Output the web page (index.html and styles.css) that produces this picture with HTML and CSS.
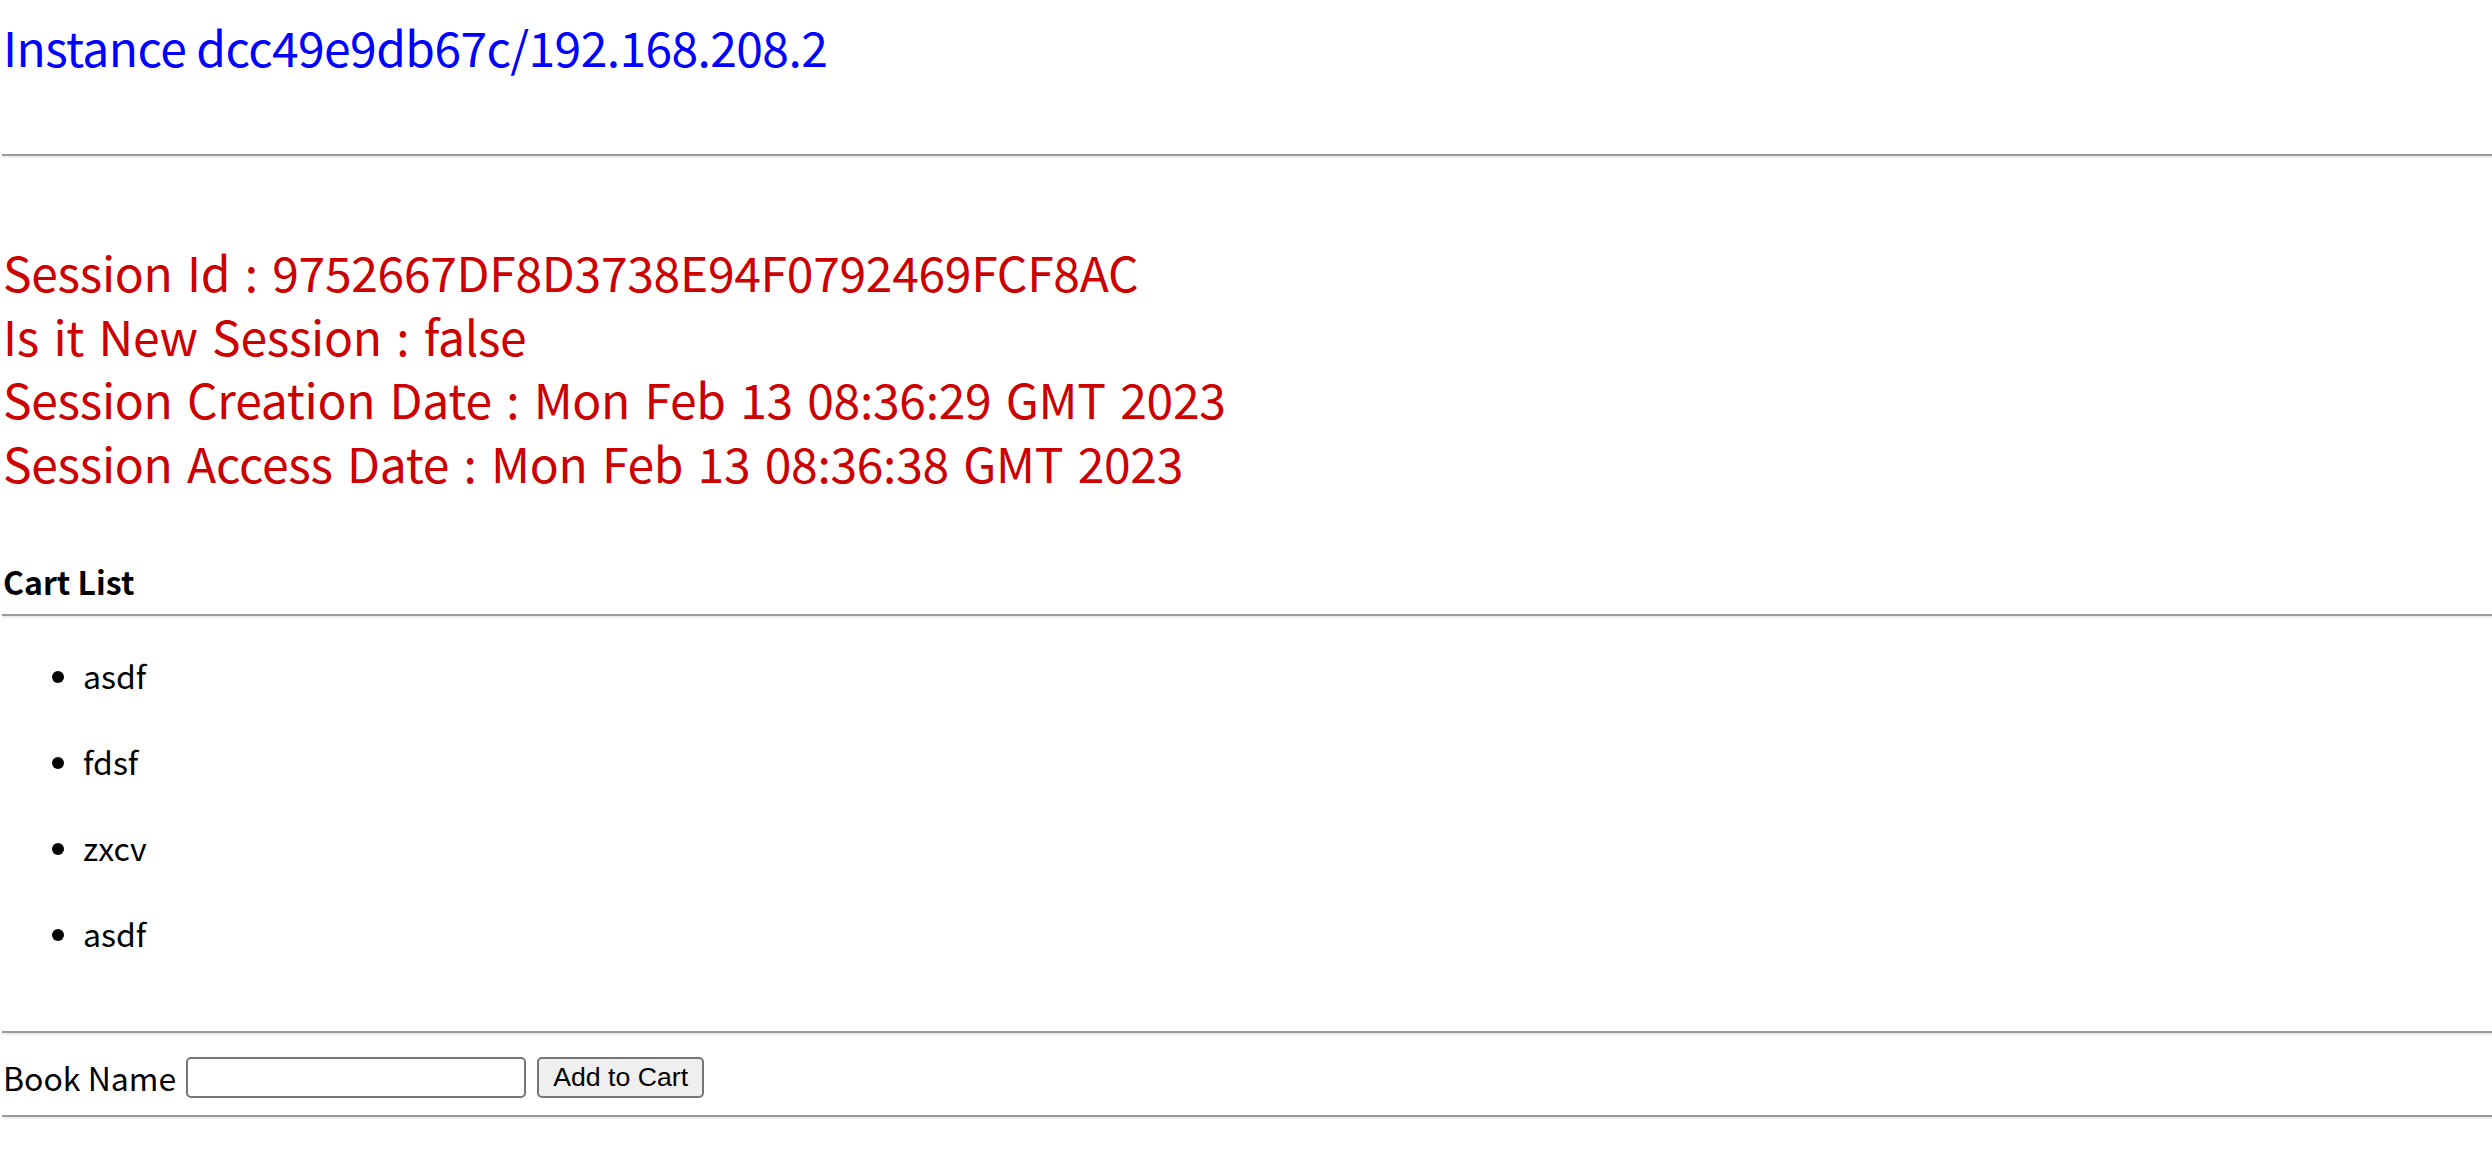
FILE: index.html
```html
<!DOCTYPE html>
<html>
<head>
<meta charset="utf-8">
<title>Session</title>
<link rel="stylesheet" href="styles.css">
</head>
<body>
<div class="page">
  <div class="instance">Instance dcc49e9db67c/192.168.208.2</div>
  <hr class="rule rule-top">
  <div class="session">
    <div class="line">Session Id : 9752667DF8D3738E94F0792469FCF8AC</div>
    <div class="line">Is it New Session : false</div>
    <div class="line">Session Creation Date : Mon Feb 13 08:36:29 GMT 2023</div>
    <div class="line">Session Access Date : Mon Feb 13 08:36:38 GMT 2023</div>
  </div>
  <div class="cart-title">Cart List</div>
  <hr class="rule rule-cart">
  <ul class="cart">
    <li>asdf</li>
    <li>fdsf</li>
    <li>zxcv</li>
    <li>asdf</li>
  </ul>
  <hr class="rule rule-form">
  <form class="add-form">
    <label class="label" for="book">Book Name</label>
    <input class="field" id="book" type="text">
    <button class="btn" type="button">Add to Cart</button>
  </form>
  <hr class="rule rule-bottom">
</div>
</body>
</html>
```
FILE: styles.css
```css
html, body {
  margin: 0;
  padding: 0;
  background: #ffffff;
}

.page {
  padding-left: 3px;
  font-family: "Noto Sans CJK KR", "Noto Sans", sans-serif;
  font-size: 32px;
  color: #000000;
}

.instance {
  margin-top: 14px;
  font-size: 48px;
  line-height: 64px;
  letter-spacing: -0.6px;
  color: #0000ff;
}

.rule {
  height: 0;
  margin: 0 0 0 -1px;
  border: 0;
  border-top: 2px solid #9a9a9a;
  border-bottom: 2px solid #eeeeee;
}

.rule-top { margin-top: 76px; }

.session {
  margin-top: 82px;
  font-size: 48px;
  line-height: 63.6px;
  letter-spacing: -0.3px;
  word-spacing: 4px;
  color: #cc0000;
}

.cart-title {
  margin-top: 66px;
  font-weight: bold;
  line-height: 43px;
}

.rule-cart { margin-top: 11px; }

.cart {
  margin: 36px 0 0 0;
  padding-left: 80px;
  line-height: 43px;
}

.cart li {
  margin-bottom: 43px;
}

.rule-form { margin-top: 76px; }

.add-form {
  display: flex;
  align-items: center;
  gap: 8px;
  height: 43px;
  margin: 21px 0 0 0;
}

.label {
  line-height: 43px;
}

.field {
  box-sizing: border-box;
  width: 340px;
  height: 41px;
  margin: 0 0 0 2px;
  border: 2px solid #767676;
  border-radius: 5px;
  background: #ffffff;
  padding: 2px 4px;
  font: 26.67px "Liberation Sans", Arial, sans-serif;
}

.btn {
  box-sizing: border-box;
  width: 167px;
  height: 41px;
  margin-left: 3px;
  border: 2px solid #767676;
  border-radius: 5px;
  background: #efefef;
  color: #000000;
  padding: 0;
  font: 26.67px "Liberation Sans", Arial, sans-serif;
}

.rule-bottom { margin-top: 16px; }
```
